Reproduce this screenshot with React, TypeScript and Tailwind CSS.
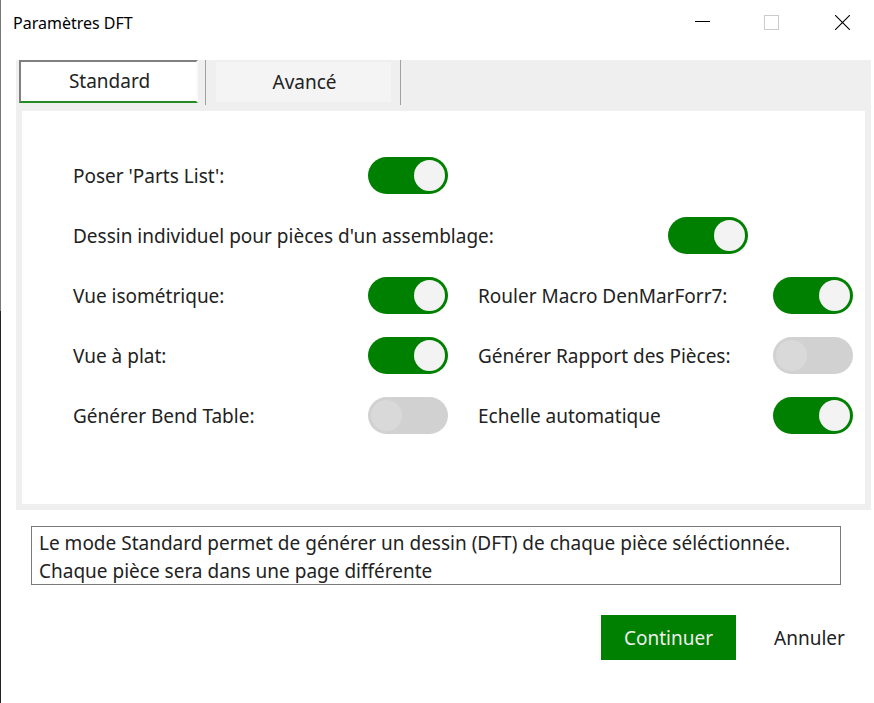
import { useId, useState } from "react";

type OptionProps = {
  label: string;
  initial?: boolean;
  wide?: boolean;
};

function Option({ label, initial = false, wide = false }: OptionProps) {
  const id = useId();
  const [on, setOn] = useState(initial);
  return (
    <div className={wide ? "col-span-2 flex items-center" : "flex items-center"}>
      <label htmlFor={id} className={wide ? "w-[595px] shrink-0 pt-0.5 whitespace-nowrap" : "w-[295px] shrink-0 pt-0.5 whitespace-nowrap"}>
        {label}
      </label>
      <input
        id={id}
        type="checkbox"
        role="switch"
        checked={on}
        onChange={(e) => setOn(e.target.checked)}
        className="flex h-[37px] w-20 shrink-0 appearance-none items-center rounded-full bg-[#d1d1d1] px-[3px] before:block before:size-[31px] before:rounded-full before:bg-[#d9d9d9] checked:justify-end checked:bg-[#008000] checked:before:bg-[#f3f3f3]"
      />
    </div>
  );
}

export default function App() {
  return (
    <div className="flex min-h-screen bg-white font-['Noto_Sans','Open_Sans',sans-serif] text-[19px] leading-7 text-[#222]">
      <div className="flex w-px flex-col">
        <div className="h-[311px] bg-[#777]" />
        <div className="grow bg-[#222]" />
      </div>
      <div className="flex min-w-0 grow flex-col">
        <header className="flex h-[60px] items-start justify-between pl-3">
          <h1 className="pt-[9px] text-[16px] leading-7 text-black">Paramètres DFT</h1>
          <div className="flex pt-[6px]">
            <button aria-label="Réduire" className="flex h-8 w-[68px] items-center justify-center">
              <svg width="15" height="15" viewBox="0 0 15 15" shapeRendering="crispEdges">
                <path d="M0 6.5H15" stroke="#000" />
              </svg>
            </button>
            <button aria-label="Agrandir" disabled className="flex h-8 w-[70px] items-center justify-center">
              <svg width="15" height="15" viewBox="0 0 15 15" fill="none" shapeRendering="crispEdges">
                <rect x=".5" y=".5" width="14" height="14" stroke="#ccc" />
              </svg>
            </button>
            <button aria-label="Fermer" className="mr-[-4px] flex h-8 w-[72px] items-center justify-center">
              <svg width="15" height="15" viewBox="0 0 15 15">
                <path d="M0 0L15 15M15 0L0 15" stroke="#000" strokeWidth="1.1" />
              </svg>
            </button>
          </div>
        </header>

        <section className="mr-[3px] ml-[15px] border-6 border-t-0 border-[#efefef]">
          <div role="tablist" className="-ml-[3px] flex h-[51px] bg-[#efefef]">
            <button
              role="tab"
              aria-selected="true"
              className="h-[43px] w-[179px] border-2 border-t-[#808080] border-r-[#fafafa] border-b-[#228b22] border-l-[#808080] bg-white pl-[2px] leading-[39px]"
            >
              Standard
            </button>
            <span className="ml-[7px] h-[45px] w-px bg-[#a0a0a0]" />
            <button role="tab" aria-selected="false" className="mt-[2px] ml-[10px] h-10 w-[175px] bg-[#f4f4f4] pl-[2px]">
              Avancé
            </button>
            <span className="ml-[9px] h-[45px] w-px bg-[#a0a0a0]" />
          </div>
          <div className="bg-white pt-[34px] pb-[59px] pl-[51px]">
            <div className="grid auto-rows-[60px] grid-cols-[405px_1fr]">
              <Option label="Poser 'Parts List':" initial />
              <span />
              <Option label="Dessin individuel pour pièces d'un assemblage:" initial wide />
              <Option label="Vue isométrique:" initial />
              <Option label="Rouler Macro DenMarForr7:" initial />
              <Option label="Vue à plat:" initial />
              <Option label="Générer Rapport des Pièces:" />
              <Option label="Générer Bend Table:" />
              <Option label="Echelle automatique" initial />
            </div>
          </div>
        </section>

        <textarea
          readOnly
          aria-label="Description du mode"
          rows={2}
          className="mt-4 mr-[33px] ml-[30px] h-[59px] resize-none overflow-hidden border border-[#7a7a7a] px-[7px] pt-[2px] leading-7"
          value={"Le mode Standard permet de générer un dessin (DFT) de chaque pièce séléctionnée.\nChaque pièce sera dans une page différente"}
        />

        <footer className="mt-[30px] flex justify-end gap-[9px]">
          <button className="h-[45px] w-[135px] bg-[#008000] text-[#eee]">Continuer</button>
          <button className="h-[45px] w-[129px]">Annuler</button>
        </footer>
      </div>
    </div>
  );
}
